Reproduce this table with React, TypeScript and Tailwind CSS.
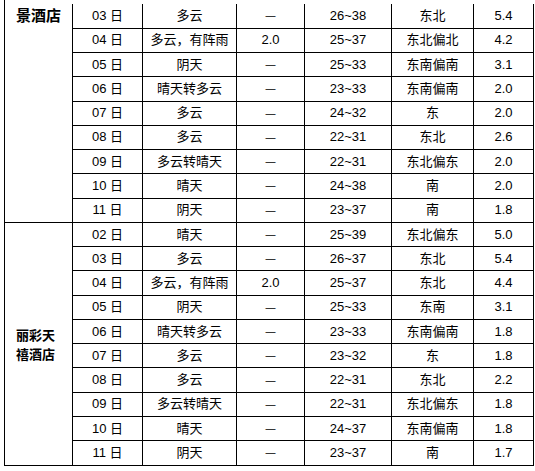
import React from "react";

type Row = [string, string, string, string, string, string];

const rows1: Row[] = [
  ["03 日", "多云", "—", "26~38", "东北", "5.4"],
  ["04 日", "多云，有阵雨", "2.0", "25~37", "东北偏北", "4.2"],
  ["05 日", "阴天", "—", "25~33", "东南偏南", "3.1"],
  ["06 日", "晴天转多云", "—", "23~33", "东南偏南", "2.0"],
  ["07 日", "多云", "—", "24~32", "东", "2.0"],
  ["08 日", "多云", "—", "22~31", "东北", "2.6"],
  ["09 日", "多云转晴天", "—", "22~31", "东北偏东", "2.0"],
  ["10 日", "晴天", "—", "24~38", "南", "2.0"],
  ["11 日", "阴天", "—", "23~37", "南", "1.8"],
];

const rows2: Row[] = [
  ["02 日", "晴天", "—", "25~39", "东北偏东", "5.0"],
  ["03 日", "多云", "—", "26~37", "东北", "5.4"],
  ["04 日", "多云，有阵雨", "2.0", "25~37", "东北", "4.4"],
  ["05 日", "阴天", "—", "25~33", "东南", "3.1"],
  ["06 日", "晴天转多云", "—", "23~33", "东南偏南", "1.8"],
  ["07 日", "多云", "—", "23~32", "东", "1.8"],
  ["08 日", "多云", "—", "22~31", "东北", "2.2"],
  ["09 日", "多云转晴天", "—", "22~31", "东北偏东", "1.8"],
  ["10 日", "晴天", "—", "24~37", "东南偏南", "1.8"],
  ["11 日", "阴天", "—", "23~37", "南", "1.7"],
];

function Cells({ r, first }: { r: Row; first?: boolean }) {
  const base = first
    ? "border-x border-b border-t-0 border-black text-center p-0 whitespace-nowrap"
    : "border border-black text-center p-0 whitespace-nowrap";
  return (
    <>
      {r.map((c, i) => (
        <td key={i} className={base}>
          {c === "—" ? <span className="text-[10px]">—</span> : c}
        </td>
      ))}
    </>
  );
}

export default function App() {
  return (
    <div className="bg-white w-[535px] h-[471px] overflow-hidden">
      <table className="ml-[4px] border-collapse table-fixed w-[529px] font-['Liberation_Sans','Noto_Sans_CJK_SC',sans-serif] text-[13px] leading-[16px] text-black">
        <colgroup>
          <col className="w-[68px]" />
          <col className="w-[70px]" />
          <col className="w-[94px]" />
          <col className="w-[68px]" />
          <col className="w-[87px]" />
          <col className="w-[82px]" />
          <col className="w-[60px]" />
        </colgroup>
        <tbody>
          <tr className="h-[4px]">
            <td
              rowSpan={10}
              className="border-l border-b border-black border-t-0 border-r-0 align-top text-left pl-[11px] pt-[5px] p-0 font-bold text-[15px] leading-[20px] font-['Noto_Sans_CJK_SC',sans-serif]"
            >
              景酒店
            </td>
            <td colSpan={6} className="p-0 border-0"></td>
          </tr>
          {rows1.map((r, i) => (
            <tr key={"a" + i} className="h-[24.28px]">
              <Cells r={r} first={i === 0} />
            </tr>
          ))}
          {rows2.map((r, i) => (
            <tr key={"b" + i} className="h-[24.28px]">
              {i === 0 && (
                <td
                  rowSpan={10}
                  className="border border-black align-middle text-left pl-[11px] p-0 font-bold text-[13px] leading-[19px] font-['Noto_Sans_CJK_SC',sans-serif]"
                >
                  丽彩天
                  <br />
                  禧酒店
                </td>
              )}
              <Cells r={r} />
            </tr>
          ))}
        </tbody>
      </table>
    </div>
  );
}
